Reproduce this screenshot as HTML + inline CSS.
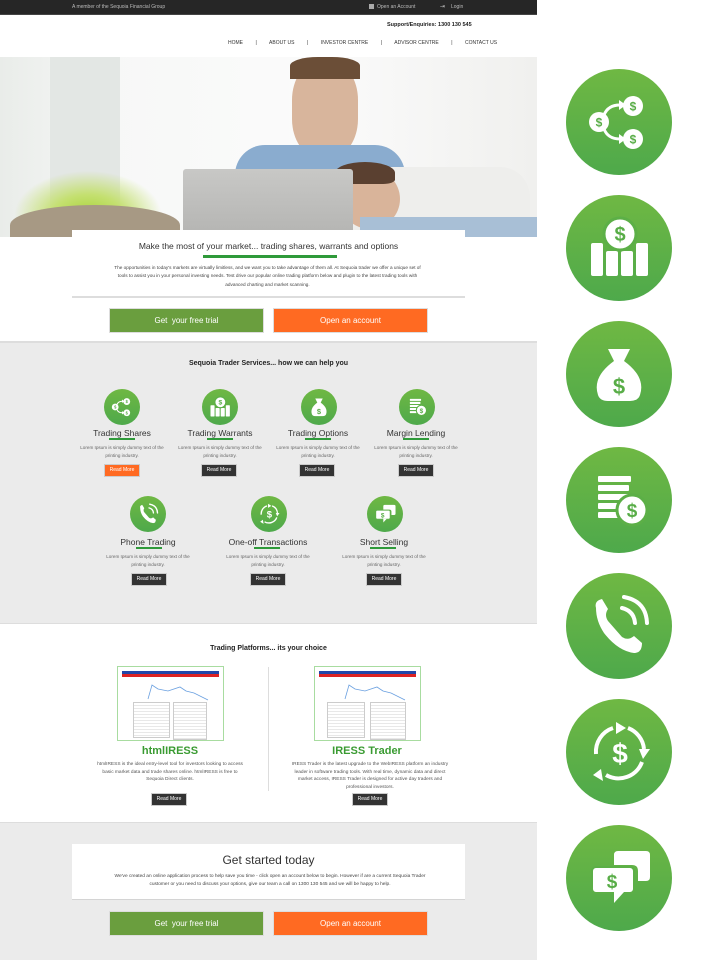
<!DOCTYPE html>
<html><head><meta charset="utf-8">
<style>
*{margin:0;padding:0;box-sizing:border-box}
body{width:701px;height:960px;background:#fff;font-family:"Liberation Sans","DejaVu Sans",sans-serif;position:relative;overflow:hidden;color:#333}
.a{position:absolute}
.c{text-align:center}
.btn{position:absolute;color:#fff;font-size:8px;text-align:center;line-height:23px;box-shadow:0 0 0 1px #ddd}
.rm{position:absolute;width:34px;height:11px;background:#333;color:#fff;font-size:5px;line-height:11px;text-align:center;box-shadow:0 0 0 1px #ccc}
.st{position:absolute;width:110px;text-align:center;font-size:8.5px;color:#333}
.ul{position:absolute;width:26px;height:2px;background:#2f9a3a}
.lt{position:absolute;width:84px;margin-left:13px;text-align:center;font-size:4.6px;line-height:8px;color:#666}
.ic{position:absolute}
</style></head><body>
<svg width="0" height="0" style="position:absolute">
<defs>
<linearGradient id="g" x1="0" y1="0" x2="0" y2="1"><stop offset="0" stop-color="#6fb843"/><stop offset="1" stop-color="#4ea94b"/></linearGradient>
<symbol id="i1" viewBox="0 0 106 106"><circle cx="53" cy="53" r="53" fill="url(#g)"/>
<g fill="none" stroke="#fff" stroke-width="3"><path d="M38 46 Q42 36 54 36"/><path d="M38 60 Q42 70 54 70"/></g>
<g fill="#fff"><path d="M53 31 L60 36 L53 41Z"/><path d="M53 65 L60 70 L53 75Z"/>
<circle cx="33" cy="53" r="10"/><circle cx="67" cy="37" r="10"/><circle cx="67" cy="70" r="10"/></g>
<g fill="#58ad47" font-family="Liberation Sans" font-weight="bold" font-size="12" text-anchor="middle"><text x="33" y="57.5">$</text><text x="67" y="41.5">$</text><text x="67" y="74.5">$</text></g></symbol>
<symbol id="i2" viewBox="0 0 106 106"><circle cx="53" cy="53" r="53" fill="url(#g)"/>
<g fill="#fff"><rect x="25" y="48" width="12" height="33" rx="2"/><rect x="40" y="56" width="12" height="25" rx="2"/><rect x="55" y="56" width="12" height="25" rx="2"/><rect x="70" y="48" width="12" height="33" rx="2"/>
<circle cx="54" cy="39" r="16" stroke="#5caf47" stroke-width="3"/></g>
<text x="54" y="46" fill="#58ad47" font-family="Liberation Sans" font-weight="bold" font-size="20" text-anchor="middle">$</text></symbol>
<symbol id="i3" viewBox="0 0 106 106"><circle cx="53" cy="53" r="53" fill="url(#g)"/>
<path fill="#fff" d="M42 28 L64 28 L58 40 Q80 56 74 74 Q72 80 64 80 L42 80 Q34 80 32 74 Q26 56 48 40Z"/>
<text x="53" y="73" fill="#58ad47" font-family="Liberation Sans" font-weight="bold" font-size="22" text-anchor="middle">$</text></symbol>
<symbol id="i4" viewBox="0 0 106 106"><circle cx="53" cy="53" r="53" fill="url(#g)"/>
<g fill="#fff"><rect x="32" y="29" width="33" height="6" rx="1"/><rect x="32" y="38" width="31" height="6" rx="1"/><rect x="32" y="47" width="33" height="6" rx="1"/><rect x="32" y="56" width="30" height="6" rx="1"/><rect x="32" y="65" width="30" height="6" rx="1"/>
<circle cx="66" cy="63" r="15" stroke="#5caf47" stroke-width="3"/></g>
<text x="66" y="70" fill="#58ad47" font-family="Liberation Sans" font-weight="bold" font-size="19" text-anchor="middle">$</text></symbol>
<symbol id="i5" viewBox="0 0 106 106"><circle cx="53" cy="53" r="53" fill="url(#g)"/>
<path fill="#fff" d="M30 35 Q28 28 36 26 L42 36 Q38 42 42 48 L56 64 Q62 68 68 63 L76 70 Q76 80 68 80 Q52 78 38 60 Q30 48 30 35Z"/>
<g fill="none" stroke="#fff" stroke-width="4" stroke-linecap="round"><path d="M56 35 Q68 38 69 50"/><path d="M58 24 Q80 28 81 50"/></g></symbol>
<symbol id="i6" viewBox="0 0 106 106"><circle cx="53" cy="53" r="53" fill="url(#g)"/>
<g fill="none" stroke="#fff" stroke-width="4"><path d="M47 29 A25 25 0 0 0 30 55"/><path d="M62 29 A25 25 0 0 1 78 50"/><path d="M76 63 A25 25 0 0 1 40 76"/></g>
<g fill="#fff"><path d="M50 23 L60 29 L50 35Z"/><path d="M73 50 L84 50 L77 60Z"/><path d="M35 70 L37 82 L27 76Z"/></g>
<text x="54" y="64" fill="#fff" font-family="Liberation Sans" font-weight="bold" font-size="28" text-anchor="middle">$</text></symbol>
<symbol id="i7" viewBox="0 0 106 106"><circle cx="53" cy="53" r="53" fill="url(#g)"/>
<g fill="#fff"><path d="M48 30 Q48 26 52 26 L80 26 Q84 26 84 30 L84 52 Q84 56 80 56 L72 56 L72 46 Q72 40 66 40 L48 40Z"/>
<rect x="26" y="42" width="42" height="26" rx="4" stroke="#5caf47" stroke-width="2"/><path d="M48 67 L48 78 L58 67Z"/></g>
<text x="46" y="63" fill="#58ad47" font-family="Liberation Sans" font-weight="bold" font-size="19" text-anchor="middle">$</text></symbol>
</defs></svg>

<!-- top bar -->
<div class="a" style="left:0;top:0;width:537px;height:15px;background:#262626;border-bottom:1px solid #444"></div>
<div class="a" style="left:72px;top:4px;font-size:5px;color:#bbb">A member of the Sequoia Financial Group</div>
<div class="a" style="left:369px;top:4px;width:5px;height:5px;background:#aaa"></div>
<div class="a" style="left:377px;top:4px;font-size:5px;color:#bbb">Open an Account</div>
<div class="a" style="left:440px;top:3px;font-size:6px;color:#bbb">⇥</div>
<div class="a" style="left:451px;top:4px;font-size:5px;color:#bbb">Login</div>
<div class="a" style="left:387px;top:22px;font-size:5.5px;color:#222;font-weight:bold">Support/Enquiries: 1300 130 545</div>
<div class="a" style="left:228px;top:40px;font-size:5px;color:#333;word-spacing:0;white-space:pre">HOME         |         ABOUT US         |         INVESTOR CENTRE         |         ADVISOR CENTRE         |         CONTACT US</div>

<!-- hero -->
<div class="a" style="left:0;top:57px;width:537px;height:180px;background:linear-gradient(90deg,#e9ece9 0%,#f7f8f7 20%,#fbfbfb 60%,#f0f0ee 100%);overflow:hidden">
<div class="a" style="left:50px;top:0;width:70px;height:180px;background:#e3e7e4"></div>
<div class="a" style="left:8px;top:110px;width:160px;height:60px;background:radial-gradient(ellipse at 50% 80%,#a9d33b 0,#c4e070 30%,transparent 65%)"></div>
<div class="a" style="left:10px;top:148px;width:170px;height:40px;border-radius:50% 50% 0 0;background:#a79984"></div>
<div class="a" style="left:292px;top:5px;width:66px;height:95px;border-radius:40%;background:#d8b59c"></div>
<div class="a" style="left:290px;top:0;width:70px;height:22px;border-radius:40% 40% 0 0;background:#6b4e37"></div>
<div class="a" style="left:235px;top:88px;width:170px;height:92px;background:#8aaccf;border-radius:30px 30px 0 0"></div>
<div class="a" style="left:330px;top:110px;width:200px;height:70px;background:#eeeeec;border-radius:60px 30px 0 0"></div>
<div class="a" style="left:340px;top:112px;width:60px;height:60px;border-radius:50%;background:#d9b49a"></div>
<div class="a" style="left:335px;top:105px;width:60px;height:22px;border-radius:50% 50% 20% 20%;background:#5a4030"></div>
<div class="a" style="left:360px;top:160px;width:177px;height:20px;background:#a8bfd6"></div>
<div class="a" style="left:183px;top:112px;width:170px;height:68px;background:linear-gradient(#c8c8c6,#b4b4b2);border-radius:3px"></div>
</div>

<div class="a" style="left:72px;top:230px;width:393px;height:68px;background:#fff;border-bottom:2px solid #ddd"></div>
<div class="a c" style="left:72px;top:241px;width:393px;font-size:8.5px;color:#333">Make the most of your market... trading shares, warrants and options</div>
<div class="a" style="left:203px;top:255px;width:134px;height:3px;background:#2f9a3a"></div>
<div class="a c" style="left:110px;top:264px;width:315px;font-size:4.7px;line-height:8.3px;color:#444">The opportunities in today's markets are virtually limitless, and we want you to take advantage of them all. At Sequoia trader we offer a unique set of tools to assist you in your personal investing needs.  Test drive our popular online trading platform below and plugin to the latest trading tools with advanced charting and market scanning.</div>
<div class="btn" style="left:110px;top:309px;width:153px;height:23px;background:#6a9e3e">Get&nbsp; your free trial</div>
<div class="btn" style="left:274px;top:309px;width:153px;height:23px;background:#ff6a22">Open an account</div>

<!-- services -->
<div class="a" style="left:0;top:341px;width:537px;height:283px;background:#ebebeb;border-top:2px solid #ddd;border-bottom:1px solid #ddd"></div>
<div class="a c" style="left:0;top:360px;width:537px;font-size:7px;font-weight:bold;color:#222">Sequoia Trader Services... how we can help you</div>

<svg class="ic" style="left:104px;top:389px" width="36" height="36"><use href="#i1"/></svg>
<svg class="ic" style="left:202px;top:389px" width="36" height="36"><use href="#i2"/></svg>
<svg class="ic" style="left:301px;top:389px" width="36" height="36"><use href="#i3"/></svg>
<svg class="ic" style="left:399px;top:389px" width="36" height="36"><use href="#i4"/></svg>
<div class="st" style="left:67px;top:428px">Trading Shares</div>
<div class="st" style="left:165px;top:428px">Trading Warrants</div>
<div class="st" style="left:263px;top:428px">Trading Options</div>
<div class="st" style="left:361px;top:428px">Margin Lending</div>
<div class="ul" style="left:109px;top:438px"></div><div class="ul" style="left:207px;top:438px"></div><div class="ul" style="left:305px;top:438px"></div><div class="ul" style="left:403px;top:438px"></div>
<div class="lt" style="left:67px;top:444px">Lorem Ipsum is simply dummy text of the printing industry.</div>
<div class="lt" style="left:165px;top:444px">Lorem Ipsum is simply dummy text of the printing industry.</div>
<div class="lt" style="left:263px;top:444px">Lorem Ipsum is simply dummy text of the printing industry.</div>
<div class="lt" style="left:361px;top:444px">Lorem Ipsum is simply dummy text of the printing industry.</div>
<div class="rm" style="left:105px;top:465px;background:#ff6a22">Read More</div>
<div class="rm" style="left:202px;top:465px">Read More</div>
<div class="rm" style="left:300px;top:465px">Read More</div>
<div class="rm" style="left:399px;top:465px">Read More</div>

<svg class="ic" style="left:130px;top:496px" width="36" height="36"><use href="#i5"/></svg>
<svg class="ic" style="left:251px;top:496px" width="36" height="36"><use href="#i6"/></svg>
<svg class="ic" style="left:367px;top:496px" width="36" height="36"><use href="#i7"/></svg>
<div class="st" style="left:93px;top:537px">Phone Trading</div>
<div class="st" style="left:213px;top:537px">One-off Transactions</div>
<div class="st" style="left:329px;top:537px">Short Selling</div>
<div class="ul" style="left:136px;top:547px"></div><div class="ul" style="left:254px;top:547px"></div><div class="ul" style="left:370px;top:547px"></div>
<div class="lt" style="left:93px;top:553px">Lorem Ipsum is simply dummy text of the printing industry.</div>
<div class="lt" style="left:213px;top:553px">Lorem Ipsum is simply dummy text of the printing industry.</div>
<div class="lt" style="left:329px;top:553px">Lorem Ipsum is simply dummy text of the printing industry.</div>
<div class="rm" style="left:132px;top:574px">Read More</div>
<div class="rm" style="left:251px;top:574px">Read More</div>
<div class="rm" style="left:367px;top:574px">Read More</div>

<!-- platforms -->
<div class="a c" style="left:0;top:645px;width:537px;font-size:7px;font-weight:bold;color:#222">Trading Platforms... its your choice</div>
<div class="a" style="left:268px;top:667px;width:1px;height:124px;background:#ddd"></div>
<div class="a" style="left:117px;top:666px;width:107px;height:75px;border:1px solid #a8dca0;background:#fff">
<div class="a" style="left:4px;top:4px;width:97px;height:3px;background:#2346a8"></div>
<div class="a" style="left:4px;top:7px;width:97px;height:3px;background:#d22"></div>
<svg class="a" style="left:10px;top:14px" width="85" height="20"><polyline fill="none" stroke="#6aa0e0" stroke-width="0.8" points="20,18 24,4 30,8 40,10 52,6 58,10 66,12 74,16 80,19"/></svg>
<div class="a" style="left:15px;top:35px;width:37px;height:36px;border:1px solid #ccc;background:repeating-linear-gradient(#fff 0 2px,#e8e8e8 2px 3px)"></div>
<div class="a" style="left:55px;top:35px;width:34px;height:38px;border:1px solid #ccc;background:repeating-linear-gradient(#fff 0 2px,#e8e8e8 2px 3px)"></div></div>
<div class="a" style="left:314px;top:666px;width:107px;height:75px;border:1px solid #a8dca0;background:#fff">
<div class="a" style="left:4px;top:4px;width:97px;height:3px;background:#2346a8"></div>
<div class="a" style="left:4px;top:7px;width:97px;height:3px;background:#d22"></div>
<svg class="a" style="left:10px;top:14px" width="85" height="20"><polyline fill="none" stroke="#6aa0e0" stroke-width="0.8" points="20,18 24,4 30,8 40,10 52,6 58,10 66,12 74,16 80,19"/></svg>
<div class="a" style="left:12px;top:35px;width:38px;height:36px;border:1px solid #ccc;background:repeating-linear-gradient(#fff 0 2px,#e8e8e8 2px 3px)"></div>
<div class="a" style="left:55px;top:35px;width:36px;height:38px;border:1px solid #ccc;background:repeating-linear-gradient(#fff 0 2px,#e8e8e8 2px 3px)"></div></div>
<div class="a c" style="left:90px;top:745px;width:160px;font-size:11px;font-weight:bold;color:#3a9b32">htmlIRESS</div>
<div class="a c" style="left:287px;top:745px;width:160px;font-size:11px;font-weight:bold;color:#3a9b32">IRESS Trader</div>
<div class="a c" style="left:95px;top:761px;width:150px;font-size:4.8px;line-height:7.5px;color:#555">htmlIRESS is the ideal entry-level tool for investors looking to access basic market data and trade shares online. htmlIRESS is free to Sequoia Direct clients.</div>
<div class="a c" style="left:290px;top:761px;width:160px;font-size:4.8px;line-height:7.5px;color:#555">IRESS Trader is the latest upgrade to the WebIRESS platform an industry leader in software trading tools. With real time, dynamic data and direct market access, IRESS Trader is designed for active day traders and professional investors.</div>
<div class="rm" style="left:152px;top:794px">Read More</div>
<div class="rm" style="left:353px;top:794px">Read More</div>

<!-- bottom -->
<div class="a" style="left:0;top:822px;width:537px;height:138px;background:#ebebeb;border-top:1px solid #ddd"></div>
<div class="a" style="left:72px;top:844px;width:393px;height:56px;background:#fff;border-bottom:1px solid #d4d4d4"></div>
<div class="a c" style="left:72px;top:853px;width:393px;font-size:12px;color:#333">Get started today</div>
<div class="a c" style="left:105px;top:873px;width:330px;font-size:4.8px;line-height:8px;color:#444">We've created an online application process to help save you time - click open an account below to begin. However if are a current Sequoia Trader customer or you need to discuss your options, give our team a call on 1300 130 545 and we will be happy to help.</div>
<div class="btn" style="left:110px;top:912px;width:153px;height:23px;background:#6a9e3e">Get&nbsp; your free trial</div>
<div class="btn" style="left:274px;top:912px;width:153px;height:23px;background:#ff6a22">Open an account</div>

<!-- right column icons -->
<svg class="ic" style="left:566px;top:69px" width="106" height="106"><use href="#i1"/></svg>
<svg class="ic" style="left:566px;top:195px" width="106" height="106"><use href="#i2"/></svg>
<svg class="ic" style="left:566px;top:321px" width="106" height="106"><use href="#i3"/></svg>
<svg class="ic" style="left:566px;top:447px" width="106" height="106"><use href="#i4"/></svg>
<svg class="ic" style="left:566px;top:573px" width="106" height="106"><use href="#i5"/></svg>
<svg class="ic" style="left:566px;top:699px" width="106" height="106"><use href="#i6"/></svg>
<svg class="ic" style="left:566px;top:825px" width="106" height="106"><use href="#i7"/></svg>
</body></html>
